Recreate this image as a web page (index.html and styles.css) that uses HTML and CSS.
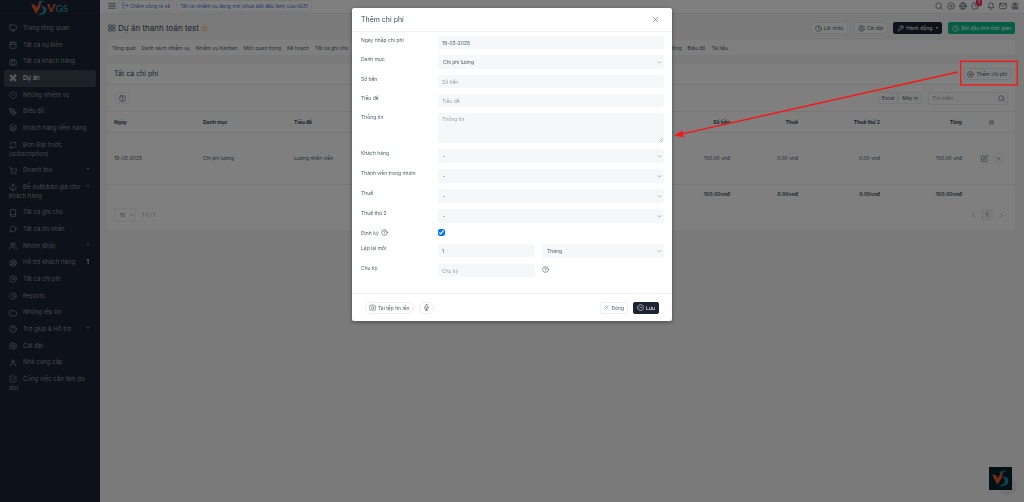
FILE: index.html
```html
<!DOCTYPE html>
<html lang="vi">

<head>
    <meta charset="UTF-8">
    <meta name="viewport" content="width=device-width, initial-scale=1.0">
    <title>Dự án thanh toán test</title>
    <link rel="stylesheet" href="styles.css">
</head>

<body>
    <!-- icon set -->
    <svg class="sprite" aria-hidden="true">
        <symbol id="monitor" viewBox="0 0 24 24"><rect x="2" y="3" width="20" height="14" rx="2"/><path d="M8 21h8M12 17v4"/></symbol>
        <symbol id="calendar" viewBox="0 0 24 24"><rect x="3" y="4" width="18" height="18" rx="2"/><path d="M16 2v4M8 2v4M3 10h18"/></symbol>
        <symbol id="briefcase" viewBox="0 0 24 24"><rect x="2" y="7" width="20" height="14" rx="2"/><path d="M16 21V5a2 2 0 0 0-2-2h-4a2 2 0 0 0-2 2v16"/></symbol>
        <symbol id="command" viewBox="0 0 24 24"><path d="M18 3a3 3 0 0 0-3 3v12a3 3 0 1 0 3-3H6a3 3 0 1 0 3 3V6a3 3 0 1 0-3 3h12a3 3 0 0 0 0-6z"/></symbol>
        <symbol id="check-circle" viewBox="0 0 24 24"><path d="M22 11v1a10 10 0 1 1-6-9.100"/><path d="M22 4L12 14l-3-3"/></symbol>
        <symbol id="pen" viewBox="0 0 24 24"><path d="M12 19l7-7 3 3-7 7z"/><path d="M18 13l-1.500-7.500L2 2l3.500 14.500L13 18zM2 2l7.600 7.600"/><circle cx="11" cy="11" r="2"/></symbol>
        <symbol id="layers" viewBox="0 0 24 24"><path d="M12 2L2 7l10 5 10-5zM2 17l10 5 10-5M2 12l10 5 10-5"/></symbol>
        <symbol id="repeat" viewBox="0 0 24 24"><path d="M17 1l4 4-4 4"/><path d="M3 11V9a4 4 0 0 1 4-4h14M7 23l-4-4 4-4"/><path d="M21 13v2a4 4 0 0 1-4 4H3"/></symbol>
        <symbol id="cart" viewBox="0 0 24 24"><circle cx="9" cy="21" r="1"/><circle cx="20" cy="21" r="1"/><path d="M1 1h4l2.700 13.400a2 2 0 0 0 2 1.600h9.700a2 2 0 0 0 2-1.600L23 6H6"/></symbol>
        <symbol id="anchor" viewBox="0 0 24 24"><circle cx="12" cy="5" r="3"/><path d="M12 22V8M5 12H2a10 10 0 0 0 20 0h-3"/></symbol>
        <symbol id="book" viewBox="0 0 24 24"><path d="M4 19.500A2.500 2.500 0 0 1 6.500 17H20"/><path d="M6.500 2H20v20H6.500A2.500 2.500 0 0 1 4 19.500v-15A2.500 2.500 0 0 1 6.500 2z"/></symbol>
        <symbol id="message" viewBox="0 0 24 24"><path d="M21 11.500a8.400 8.400 0 0 1-12.700 7.600L3 21l1.900-5.700A8.500 8.500 0 1 1 21 11.500z"/></symbol>
        <symbol id="users" viewBox="0 0 24 24"><path d="M17 21v-2a4 4 0 0 0-4-4H5a4 4 0 0 0-4 4v2"/><circle cx="9" cy="7" r="4"/><path d="M23 21v-2a4 4 0 0 0-3-3.900M16 3.100a4 4 0 0 1 0 7.800"/></symbol>
        <symbol id="lifebuoy" viewBox="0 0 24 24"><circle cx="12" cy="12" r="10"/><circle cx="12" cy="12" r="4"/><path d="M5 5l4 4M15 15l4 4M15 9l4-4M5 19l4-4"/></symbol>
        <symbol id="arrow-circle" viewBox="0 0 24 24"><circle cx="12" cy="12" r="10"/><path d="M12 16l4-4-4-4M8 12h8"/></symbol>
        <symbol id="pie" viewBox="0 0 24 24"><path d="M21.200 15.900A10 10 0 1 1 8 2.800"/><path d="M22 12A10 10 0 0 0 12 2v10z"/></symbol>
        <symbol id="folder" viewBox="0 0 24 24"><path d="M22 19a2 2 0 0 1-2 2H4a2 2 0 0 1-2-2V5a2 2 0 0 1 2-2h5l2 3h9a2 2 0 0 1 2 2z"/></symbol>
        <symbol id="help" viewBox="0 0 24 24"><circle cx="12" cy="12" r="10"/><path d="M9 9a3 3 0 0 1 6 1c0 2-3 3-3 3M12 17v.1"/></symbol>
        <symbol id="gear" viewBox="0 0 24 24"><path d="M10 2h4l1 3 3 1 3-1 1 4-2 3 2 3-1 4-3-1-3 1-1 3h-4l-1-3-3-1-3 1-1-4 2-3-2-3 1-4 3 1 3-1z"/><circle cx="12" cy="12" r="3.500"/></symbol>
        <symbol id="user" viewBox="0 0 24 24"><path d="M20 21v-2a4 4 0 0 0-4-4H8a4 4 0 0 0-4 4v2"/><circle cx="12" cy="7" r="4"/></symbol>
        <symbol id="check-square" viewBox="0 0 24 24"><path d="M9 11l3 3L22 4"/><path d="M21 12v7a2 2 0 0 1-2 2H5a2 2 0 0 1-2-2V5a2 2 0 0 1 2-2h11"/></symbol>
        <symbol id="chevron-down" viewBox="0 0 24 24"><path d="M5 8l7 7 7-7"/></symbol>
        <symbol id="menu" viewBox="0 0 24 24"><path d="M2 4h20M2 9h20M2 14h20M2 19h20"/></symbol>
        <symbol id="logout" viewBox="0 0 24 24"><path d="M9 3H5a2 2 0 0 0-2 2v14a2 2 0 0 0 2 2h4M16 17l5-5-5-5M21 12H9"/></symbol>
        <symbol id="grid" viewBox="0 0 24 24"><path d="M3 3h7v7H3zM14 3h7v7h-7zM14 14h7v7h-7zM3 14h7v7H3z"/></symbol>
        <symbol id="star" viewBox="0 0 24 24"><path d="M12 2l3 6.300 7 1-5 4.900 1.200 6.800L12 17.800 5.800 21 7 14.200 2 9.300l7-1z"/></symbol>
        <symbol id="search" viewBox="0 0 24 24"><circle cx="11" cy="11" r="8.500"/><path d="M22 22l-5-5"/></symbol>
        <symbol id="plus-circle" viewBox="0 0 24 24"><circle cx="12" cy="12" r="10"/><path d="M12 8v8M8 12h8"/></symbol>
        <symbol id="globe" viewBox="0 0 24 24"><circle cx="12" cy="12" r="10"/><path d="M2 12h20M12 2a15 15 0 0 1 0 20 15 15 0 0 1 0-20z"/></symbol>
        <symbol id="clock" viewBox="0 0 24 24"><circle cx="12" cy="12" r="10"/><path d="M12 6v6l4 2"/></symbol>
        <symbol id="bell" viewBox="0 0 24 24"><path d="M18 8A6 6 0 0 0 6 8c0 7-3 9-3 9h18s-3-2-3-9M14 21a2 2 0 0 1-4 0"/></symbol>
        <symbol id="mail" viewBox="0 0 24 24"><rect x="2" y="4" width="20" height="16" rx="2"/><path d="M22 6l-10 7L2 6"/></symbol>
        <symbol id="tool" viewBox="0 0 24 24"><path d="M14.700 6.300a1 1 0 0 0 0 1.400l1.600 1.600a1 1 0 0 0 1.400 0l3.800-3.800a6 6 0 0 1-8 8l-6.900 6.900a2 2 0 0 1-3-3l6.900-6.900a6 6 0 0 1 8-8z"/></symbol>
        <symbol id="columns" viewBox="0 0 24 24"><rect x="3" y="3" width="18" height="18" rx="2"/><path d="M12 3v18"/></symbol>
        <symbol id="edit" viewBox="0 0 24 24"><path d="M11 4H4a2 2 0 0 0-2 2v14a2 2 0 0 0 2 2h14a2 2 0 0 0 2-2v-7"/><path d="M18.500 2.500a2 2 0 0 1 3 3L12 15l-4 1 1-4z"/></symbol>
        <symbol id="close" viewBox="0 0 24 24"><path d="M4 4l16 16M20 4L4 20"/></symbol>
        <symbol id="left" viewBox="0 0 24 24"><path d="M15 5l-7 7 7 7"/></symbol>
        <symbol id="right" viewBox="0 0 24 24"><path d="M9 5l7 7-7 7"/></symbol>
        <symbol id="camera" viewBox="0 0 24 24"><path d="M23 19a2 2 0 0 1-2 2H3a2 2 0 0 1-2-2V8a2 2 0 0 1 2-2h4l2-3h6l2 3h4a2 2 0 0 1 2 2z"/><circle cx="12" cy="13" r="4"/></symbol>
        <symbol id="mic" viewBox="0 0 24 24"><rect x="9" y="1" width="6" height="14" rx="3"/><path d="M19 10v2a7 7 0 0 1-14 0v-2M12 19v4M8 23h8"/></symbol>
        <symbol id="mark" viewBox="0 0 48 48">
            <path class="mark-blue" d="M20 10C24 2 34-1 44 4 36 3 29 5 26 12zM30 18c10 0 18 5 16 15-2 10-14 14-28 12 10-3 20-7 19-15-1-5-5-8-7-12z"/>
            <path class="mark-orange" d="M1 11l9 3c4 2 5 6 6 9 4-7 12-17 17-19-6 10-3 16-9 24-4 6-7 9-7 14C12 36 4 24 1 11z"/>
        </symbol>
    </svg>

    <aside class="sidebar">
        <a class="brand" href="#" aria-label="VGS">
            <svg class="brand-mark"><use href="#mark"/></svg>
            <span class="brand-name"><b>V</b>GS</span>
        </a>
        <ul class="menu">
            <li><a href="#"><svg class="icon"><use href="#monitor"/></svg>Trang tổng quan</a></li>
            <li><a href="#"><svg class="icon"><use href="#calendar"/></svg>Tất cả sự kiện</a></li>
            <li><a href="#"><svg class="icon"><use href="#briefcase"/></svg>Tất cả khách hàng</a></li>
            <li class="active"><a href="#"><svg class="icon"><use href="#command"/></svg>Dự án</a></li>
            <li><a href="#"><svg class="icon"><use href="#check-circle"/></svg>Những nhiệm vụ</a></li>
            <li><a href="#"><svg class="icon"><use href="#pen"/></svg>Biểu đồ</a></li>
            <li><a href="#"><svg class="icon"><use href="#layers"/></svg>Khách hàng tiềm năng</a></li>
            <li><a href="#"><svg class="icon"><use href="#repeat"/></svg>Đơn Đặt trước (subscription)</a></li>
            <li class="expand"><a href="#"><svg class="icon"><use href="#cart"/></svg>Doanh thu</a></li>
            <li class="expand"><a href="#"><svg class="icon"><use href="#anchor"/></svg>Đề xuất/báo giá cho khách hàng</a></li>
            <li><a href="#"><svg class="icon"><use href="#book"/></svg>Tất cả ghi chú</a></li>
            <li><a href="#"><svg class="icon"><use href="#message"/></svg>Tất cả tin nhắn</a></li>
            <li class="expand"><a href="#"><svg class="icon"><use href="#users"/></svg>Nhóm (Đội)</a></li>
            <li><a href="#"><svg class="icon"><use href="#lifebuoy"/></svg>Hỗ trợ khách hàng<span class="count">1</span></a></li>
            <li><a href="#"><svg class="icon"><use href="#arrow-circle"/></svg>Tất cả chi phí</a></li>
            <li><a href="#"><svg class="icon"><use href="#pie"/></svg>Reports</a></li>
            <li><a href="#"><svg class="icon"><use href="#folder"/></svg>Những tệp tin</a></li>
            <li class="expand"><a href="#"><svg class="icon"><use href="#help"/></svg>Trợ giúp &amp; Hỗ trợ</a></li>
            <li><a href="#"><svg class="icon"><use href="#gear"/></svg>Cài đặt</a></li>
            <li><a href="#"><svg class="icon"><use href="#user"/></svg>Nhà cung cấp</a></li>
            <li><a href="#"><svg class="icon"><use href="#check-square"/></svg>Công việc cần làm (to do)</a></li>
        </ul>
    </aside>

    <div class="page">
        <header class="topbar">
            <button class="plain" aria-label="Menu"><svg class="icon"><use href="#menu"/></svg></button>
            <a class="pill" href="#"><svg class="icon small"><use href="#logout"/></svg>Chấm công ra về</a>
            <a class="pill" href="#">Tất cả nhiệm vụ đang mở (chưa bắt đầu làm) của tôi31</a>
            <div class="top-icons">
                <svg class="icon"><use href="#search"/></svg>
                <svg class="icon"><use href="#plus-circle"/></svg>
                <svg class="icon"><use href="#globe"/></svg>
                <span class="timer"><svg class="icon"><use href="#clock"/></svg><span class="badge">1</span></span>
                <svg class="icon"><use href="#bell"/></svg>
                <svg class="icon"><use href="#mail"/></svg>
                <span class="avatar"><svg class="icon"><use href="#user"/></svg></span>
            </div>
        </header>

        <main class="content">
            <div class="title-bar">
                <svg class="icon"><use href="#grid"/></svg>
                <h1>Dự án thanh toán test</h1>
                <svg class="icon small star"><use href="#star"/></svg>
                <div class="actions">
                    <button class="btn"><svg class="icon small"><use href="#clock"/></svg>Lời nhắc</button>
                    <button class="btn"><svg class="icon small"><use href="#gear"/></svg>Cài đặt</button>
                    <button class="btn dark"><svg class="icon small"><use href="#tool"/></svg>Hành động<i class="caret"></i></button>
                    <button class="btn green"><svg class="icon small"><use href="#clock"/></svg>Bắt đầu tính thời gian</button>
                </div>
            </div>

            <nav class="tabs">
                <a href="#">Tổng quát</a>
                <a href="#">Danh sách nhiệm vụ</a>
                <a href="#">Nhiệm vụ Kanban</a>
                <a href="#">Mốc quan trọng</a>
                <a href="#">Kế hoạch</a>
                <a href="#">Tất cả ghi chú</a>
                <a href="#">Những tệp tin</a>
                <a href="#">Bình luận</a>
                <a href="#">Phản hồi của khách hàng</a>
                <a href="#">Bảng chấm công</a>
                <a href="#">Hóa đơn</a>
                <a href="#">Thanh toán</a>
                <a href="#">Tất cả chi phí</a>
                <a href="#">Hoạt động</a>
                <a href="#">Hợp đồng</a>
                <a href="#">Biểu đồ</a>
                <a href="#">Tài liệu</a>
            </nav>

            <section class="card">
                <div class="card-head">
                    <h2>Tất cả chi phí</h2>
                    <button class="btn"><svg class="icon small"><use href="#plus-circle"/></svg>Thêm chi phí</button>
                </div>
                <div class="toolbar">
                    <button class="btn" aria-label="Cột"><svg class="icon small"><use href="#columns"/></svg></button>
                    <div class="exports">
                        <button>Excel</button><button>Máy in</button>
                    </div>
                    <label class="search">
                        <input type="text" placeholder="Tìm kiếm" aria-label="Tìm kiếm">
                        <svg class="icon small"><use href="#search"/></svg>
                    </label>
                </div>
                <table>
                    <colgroup>
                        <col class="col-date"><col class="col-cat"><col><col class="col-sum">
                        <col class="col-tax"><col class="col-sum"><col class="col-sum"><col class="col-tools">
                    </colgroup>
                    <thead>
                        <tr>
                            <th>Ngày</th>
                            <th>Danh mục</th>
                            <th>Tiêu đề</th>
                            <th class="num">Số tiền</th>
                            <th class="num">Thuế</th>
                            <th class="num">Thuế thứ 2</th>
                            <th class="num">Tổng</th>
                            <th class="tools"><svg class="icon tiny"><use href="#menu"/></svg></th>
                        </tr>
                    </thead>
                    <tbody>
                        <tr>
                            <td>19-03-2025</td>
                            <td>Chi phí lương</td>
                            <td>Lương nhân viên</td>
                            <td class="num">100.00 vnđ</td>
                            <td class="num">0.00 vnđ</td>
                            <td class="num">0.00 vnđ</td>
                            <td class="num">100.00 vnđ</td>
                            <td class="tools">
                                <button class="round" aria-label="Sửa"><svg class="icon small"><use href="#edit"/></svg></button>
                                <button class="round" aria-label="Xóa"><svg class="icon tiny"><use href="#close"/></svg></button>
                            </td>
                        </tr>
                    </tbody>
                    <tfoot>
                        <tr>
                            <td colspan="3"></td>
                            <td class="num">100.00vnđ</td>
                            <td class="num">0.00vnđ</td>
                            <td class="num">0.00vnđ</td>
                            <td class="num">100.00vnđ</td>
                            <td></td>
                        </tr>
                    </tfoot>
                </table>
                <div class="pager">
                    <div class="select page-size">
                        <select aria-label="Số dòng"><option>10</option></select>
                        <svg class="icon tiny"><use href="#chevron-down"/></svg>
                    </div>
                    <span class="range">1-1 / 1</span>
                    <div class="pages">
                        <button aria-label="Trước"><svg class="icon tiny"><use href="#left"/></svg></button>
                        <button class="current">1</button>
                        <button aria-label="Sau"><svg class="icon tiny"><use href="#right"/></svg></button>
                    </div>
                </div>
            </section>
        </main>
    </div>

    <div class="chat-circle"></div>
    <div class="chat-logo"><svg><use href="#mark"/></svg></div>

    <div class="backdrop">
        <form class="modal" role="dialog" aria-labelledby="modal-title">
            <div class="modal-head">
                <h2 id="modal-title">Thêm chi phí</h2>
                <button type="button" class="plain" aria-label="Đóng"><svg class="icon small"><use href="#close"/></svg></button>
            </div>
            <div class="modal-body">
                <div class="row">
                    <label for="date">Ngày nhập chi phí</label>
                    <input type="text" id="date" value="19-03-2025">
                </div>
                <div class="row">
                    <label for="category">Danh mục</label>
                    <div class="select">
                        <select id="category"><option>Chi phí lương</option></select>
                        <svg class="icon tiny"><use href="#chevron-down"/></svg>
                    </div>
                </div>
                <div class="row">
                    <label for="amount">Số tiền</label>
                    <input type="text" id="amount" placeholder="Số tiền">
                </div>
                <div class="row">
                    <label for="title">Tiêu đề</label>
                    <input type="text" id="title" placeholder="Tiêu đề">
                </div>
                <div class="row">
                    <label for="info">Thông tin</label>
                    <div class="area">
                        <textarea id="info" placeholder="Thông tin"></textarea>
                        <svg class="grip" viewBox="0 0 8 8"><path d="M0 8l8-8M4 8l4-4"/></svg>
                    </div>
                </div>
                <div class="row">
                    <label for="client">Khách hàng</label>
                    <div class="select">
                        <select id="client"><option>-</option></select>
                        <svg class="icon tiny"><use href="#chevron-down"/></svg>
                    </div>
                </div>
                <div class="row">
                    <label for="member">Thành viên trong nhóm</label>
                    <div class="select">
                        <select id="member"><option>-</option></select>
                        <svg class="icon tiny"><use href="#chevron-down"/></svg>
                    </div>
                </div>
                <div class="row">
                    <label for="tax">Thuế</label>
                    <div class="select">
                        <select id="tax"><option>-</option></select>
                        <svg class="icon tiny"><use href="#chevron-down"/></svg>
                    </div>
                </div>
                <div class="row">
                    <label for="tax2">Thuế thứ 2</label>
                    <div class="select">
                        <select id="tax2"><option>-</option></select>
                        <svg class="icon tiny"><use href="#chevron-down"/></svg>
                    </div>
                </div>
                <div class="row">
                    <label for="recurring">Định kỳ <svg class="icon small"><use href="#help"/></svg></label>
                    <input type="checkbox" id="recurring" checked>
                </div>
                <div class="row split">
                    <label for="every">Lặp lại mỗi</label>
                    <input type="text" id="every" value="1">
                    <div class="select">
                        <select aria-label="Đơn vị"><option>Tháng</option></select>
                        <svg class="icon tiny"><use href="#chevron-down"/></svg>
                    </div>
                </div>
                <div class="row split">
                    <label for="cycles">Chu kỳ</label>
                    <input type="text" id="cycles" placeholder="Chu kỳ">
                    <svg class="icon small hint"><use href="#help"/></svg>
                </div>
            </div>
            <div class="modal-foot">
                <button type="button" class="btn rounded"><svg class="icon small"><use href="#camera"/></svg>Tải tệp tin lên</button>
                <button type="button" class="btn rounded" aria-label="Ghi âm"><svg class="icon small"><use href="#mic"/></svg></button>
                <button type="button" class="btn cancel"><svg class="icon tiny"><use href="#close"/></svg>Đóng</button>
                <button type="submit" class="btn dark"><svg class="icon small"><use href="#check-circle"/></svg>Lưu</button>
            </div>
        </form>
    </div>

    <!-- callout: arrow from the add button to the dialog -->
    <svg class="callout" viewBox="0 0 1080 450">
        <rect x="890" y="184" width="170" height="71"/>
        <path d="M882 216L48 403"/>
        <path class="head" d="M36 406l18-11 3 14z"/>
    </svg>
</body>

</html>
```

FILE: styles.css
```css
* {
    box-sizing: border-box;
}

body {
    margin: 0;
    min-height: 100vh;
    display: flex;
    background: #f4f4f5;
    color: #4e5e6a;
    font: 5px/8px Inter, "Noto Sans", sans-serif;
}

a {
    color: inherit;
    text-decoration: none;
}

button,
input,
select,
textarea {
    font: inherit;
    color: inherit;
    margin: 0;
}

h1,
h2 {
    margin: 0;
    font-weight: 400;
    color: #3c4858;
}

h1 {
    font-size: 8px;
}

h2 {
    font-size: 7px;
}

.sprite {
    display: none;
}

.icon {
    width: 8px;
    height: 8px;
    flex: none;
    fill: none;
    stroke: currentColor;
    stroke-width: 2;
    stroke-linecap: round;
    stroke-linejoin: round;
}

.icon.small {
    width: 7px;
    height: 7px;
}

.icon.tiny {
    width: 5px;
    height: 5px;
}

.mark-blue {
    fill: #2385a0;
}

.mark-orange {
    fill: #e0552c;
}

/* sidebar */
.sidebar {
    flex: none;
    width: 100px;
    background: #1a2332;
    color: #8b9199;
    font-size: 6px;
}

.brand {
    display: flex;
    align-items: center;
    height: 16px;
    padding-left: 31px;
    border-bottom: 1px solid #161d28;
}

.brand-mark {
    width: 16px;
    height: 16px;
}

.brand-name {
    color: #2385a0;
    font: 700 10px/16px Lato, sans-serif;
}

.brand-name b {
    color: #e0552c;
    font-size: 12px;
}

.menu {
    list-style: none;
    margin: 0;
    padding: 4px;
}

.menu li {
    position: relative;
    padding: 4px 8px 4px 5px;
    line-height: 1.45;
    border-radius: 2px;
}

.menu .icon {
    margin-right: 6px;
    vertical-align: middle;
}

.menu .active {
    background: #3a4350;
    color: #fff;
}

.menu .expand::after {
    content: "";
    position: absolute;
    top: 6px;
    right: 7px;
    border: 1px solid transparent;
    border-top: 2px solid #8b9199;
}

.menu .count {
    position: absolute;
    right: 7px;
    color: #fff;
}

/* top bar */
.page {
    flex: 1;
    min-width: 0;
}

.plain {
    display: flex;
    padding: 0;
    border: 0;
    background: none;
}

.topbar {
    display: flex;
    align-items: center;
    gap: 2px;
    height: 14px;
    padding: 0 5px 2px 8px;
    background: #fff;
    border-bottom: 1px solid #eaecee;
}

.pill {
    display: flex;
    align-items: center;
    gap: 1px;
    height: 12px;
    padding: 0 3px;
    border: 1px solid #eceef2;
    border-radius: 3px;
    color: #4a6ee0;
    white-space: nowrap;
}

.top-icons {
    display: flex;
    align-items: center;
    gap: 4px;
    margin-left: auto;
}

.timer {
    position: relative;
    display: flex;
    margin-right: 4px;
}

.badge {
    position: absolute;
    top: -4px;
    left: 5px;
    width: 6px;
    border-radius: 2px;
    background: #f5325c;
    color: #fff;
    text-align: center;
}

.avatar {
    display: flex;
    border-radius: 50%;
    background: #cdd3da;
}

.avatar .icon {
    fill: #8c95a0;
    stroke: #8c95a0;
}

/* title */
.content {
    padding: 8px 9px 0 8px;
}

.title-bar {
    display: flex;
    align-items: center;
    gap: 2px;
    height: 12px;
    margin-bottom: 6px;
}

.star {
    color: #f5a623;
}

.actions {
    display: flex;
    gap: 6px;
    margin-left: auto;
}

.btn {
    display: flex;
    align-items: center;
    gap: 2px;
    height: 12px;
    padding: 0 3px;
    border: 1px solid #eceef0;
    border-radius: 2px;
    background: #fff;
    white-space: nowrap;
}

.btn.dark {
    background: #1c2434;
    border-color: #1c2434;
    color: #fff;
}

.btn.green {
    background: #0abb87;
    border-color: #0abb87;
    color: #fff;
}

.caret {
    margin-left: 2px;
    border: 1px solid transparent;
    border-top: 2px solid #fff;
}

.tabs {
    display: flex;
    align-items: center;
    gap: 6px;
    height: 15px;
    margin-bottom: 9px;
    padding: 0 4px;
    background: #fff;
    border-radius: 2px;
    white-space: nowrap;
}

/* expense list */
.card {
    background: #fff;
    border-radius: 2px;
}

.card-head,
.toolbar,
.pager {
    display: flex;
    align-items: center;
    padding: 0 6px;
}

.card-head {
    justify-content: space-between;
    height: 21px;
    padding-right: 4px;
    border-bottom: 1px solid #eeeff1;
}

.toolbar {
    height: 27px;
    padding: 0 7px;
    border-bottom: 1px solid #eeeff1;
}

.exports {
    display: flex;
    margin-left: auto;
    margin-right: 6px;
}

.exports button {
    height: 12px;
    padding: 0 3px;
    border: 1px solid #eceef0;
    background: #fff;
}

.search {
    display: flex;
    align-items: center;
    width: 80px;
    height: 13px;
    padding: 0 2px 0 3px;
    border: 1px solid #eceef0;
    border-radius: 2px;
}

.search input {
    flex: 1;
    min-width: 0;
    padding: 0;
    border: 0;
    background: none;
}

::placeholder {
    color: #a0a4a8;
    opacity: 1;
}

table {
    width: 100%;
    table-layout: fixed;
    border-collapse: collapse;
}

.col-date {
    width: 89px;
}

.col-cat {
    width: 91px;
}

.col-sum {
    width: 82px;
}

.col-tax {
    width: 68px;
}

.col-tools {
    width: 47px;
}

th,
td {
    height: 20px;
    padding: 0 6px;
    text-align: left;
}

th,
tfoot td {
    font-weight: 700;
}

th {
    color: #3c4858;
}

tr {
    border-bottom: 1px solid #eeeff1;
}

tbody td {
    height: 52px;
}

tfoot tr {
    border: 0;
}

th.num,
td.num {
    text-align: right;
}

th.tools,
td.tools {
    padding: 0;
    text-align: center;
    white-space: nowrap;
}

.tools .icon {
    vertical-align: middle;
}

.round {
    display: inline-flex;
    align-items: center;
    justify-content: center;
    width: 11px;
    height: 11px;
    margin: 0 1px;
    padding: 0;
    border: 1px solid #eceef0;
    border-radius: 50%;
    background: #fff;
    vertical-align: middle;
}

.pager {
    height: 26px;
    padding-bottom: 4px;
}

.range {
    margin-left: 6px;
    color: #8c95a0;
}

.pages {
    display: flex;
    gap: 2px;
    margin-left: auto;
    margin-right: 2px;
}

.pages button {
    display: flex;
    align-items: center;
    justify-content: center;
    width: 12px;
    height: 12px;
    padding: 0;
    border: 0;
    border-radius: 2px;
    background: none;
}

.pages .current {
    background: #f2f3f5;
}

/* chat widget */
.chat-logo,
.chat-circle {
    position: fixed;
    right: 12px;
    bottom: 12px;
    width: 23px;
    height: 23px;
    background: #04222b;
}

.chat-logo svg {
    display: block;
    width: 17px;
    height: 19px;
    margin: 2px 3px;
}

.chat-circle {
    right: 7px;
    bottom: 6px;
    width: 20px;
    height: 20px;
    border-radius: 50%;
    background: #e6e7e9;
}

/* dialog */
.backdrop {
    position: fixed;
    inset: 0;
    padding-top: 8px;
    background: rgba(0, 0, 0, .5);
}

.modal {
    width: 320px;
    margin: 0 auto;
    background: #fff;
    border-radius: 2px;
    box-shadow: 0 1px 4px rgba(0, 0, 0, .4);
}

.modal-head {
    display: flex;
    align-items: center;
    justify-content: space-between;
    height: 24px;
    padding: 0 13px 0 9px;
    border-bottom: 1px solid #f0f1f2;
}

.modal-body {
    display: grid;
    gap: 6px;
    padding: 4px 8px 16px 9px;
}

.row {
    display: grid;
    grid-template-columns: 77px 1fr;
    align-items: start;
}

.row.split {
    grid-template-columns: 77px 97px 1fr;
}

.row.split > :last-child {
    margin-left: 7px;
}

.row label {
    display: flex;
    gap: 2px;
}

.row input[type="text"],
.row select,
.row textarea {
    display: block;
    width: 100%;
    height: 13px;
    padding: 0 4px;
    border: 0;
    border-radius: 2px;
    background: #f6f7f8;
}

.row .select select {
    height: 14px;
    padding: 0 5px 1px;
}

.row textarea {
    height: 30px;
    padding-top: 2px;
    resize: none;
}

.row input[type="checkbox"] {
    width: 7px;
    height: 7px;
    margin-bottom: 2px;
}

.area,
.select {
    position: relative;
}

.grip {
    position: absolute;
    right: 1px;
    bottom: 1px;
    width: 4px;
    height: 4px;
    stroke: #8c8c8c;
    stroke-width: 1;
}

.select select {
    appearance: none;
}

.select .icon {
    position: absolute;
    top: 5px;
    right: 2px;
    pointer-events: none;
}

.page-size select {
    width: 22px;
    height: 14px;
    padding: 0 5px;
    border: 1px solid #eceef0;
    border-radius: 2px;
    background: #fff;
}

.hint {
    margin-top: 2px;
}

.modal-foot {
    display: flex;
    align-items: center;
    gap: 5px;
    height: 28px;
    padding: 0 13px;
    border-top: 1px solid #f0f1f2;
}

.rounded {
    border-radius: 6px;
}

.cancel {
    margin-left: auto;
}

/* callout */
.callout {
    position: fixed;
    top: 0;
    right: 0;
    width: 360px;
    height: 150px;
    fill: none;
    stroke: #f91616;
    stroke-width: 4;
    pointer-events: none;
}

.callout .head {
    fill: #f91616;
}
```
